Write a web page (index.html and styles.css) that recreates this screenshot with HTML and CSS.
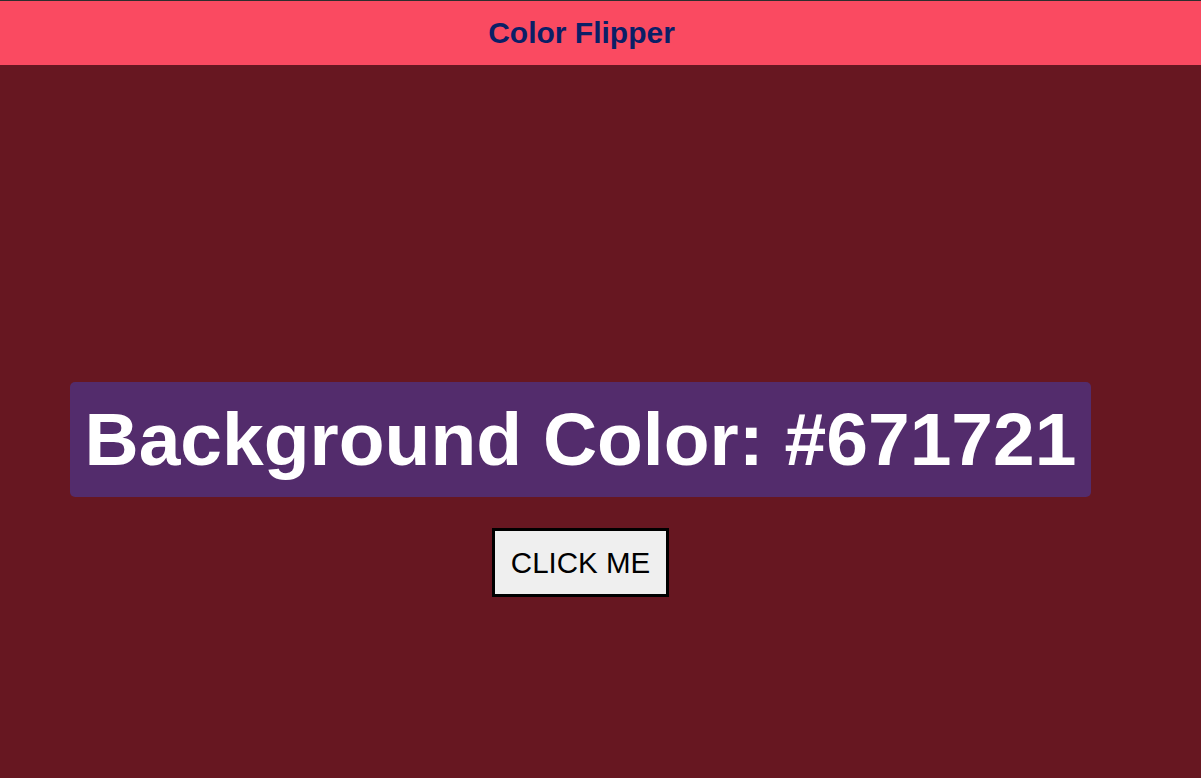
FILE: index.html
```html
<!DOCTYPE html>
<html lang="en">
<head>
<meta charset="utf-8">
<title>Color Flipper</title>
<link rel="stylesheet" href="styles.css">
</head>
<body>
<nav class="nav">
  <h2 class="nav-title">Color Flipper</h2>
</nav>
<main class="main">
  <h1 class="color-label">Background Color: <span class="color-value">#671721</span></h1>
  <button class="btn" type="button">CLICK ME</button>
</main>
</body>
</html>
```
FILE: styles.css
```css
* { box-sizing: border-box; }
html, body { margin: 0; padding: 0; }
body {
  background: #671721;
  font-family: "Liberation Sans", Arial, sans-serif;
  min-height: 100vh;
  border-top: 1px solid #2e2e2e;
}
.nav {
  background: #fa4a61;
  height: 64px;
  display: flex;
  align-items: center;
  justify-content: center;
  padding-right: 38px;
}
.nav-title {
  margin: 0;
  font-size: 30px;
  font-weight: bold;
  color: #0b1f66;
}
.main {
  width: 1161px;
  display: flex;
  flex-direction: column;
  align-items: center;
  padding-top: 317px;
}
.color-label {
  margin: 0;
  width: 1021px;
  background: #532c6c;
  color: #ffffff;
  border-radius: 5px;
  font-size: 75px;
  font-weight: bold;
  line-height: 85px;
  padding: 15px 0;
  text-align: center;
}
.btn {
  margin-top: 31px;
  font-family: "Liberation Sans", Arial, sans-serif;
  font-size: 29.5px;
  background: #efefef;
  color: #000;
  border: 3px solid #000;
  border-radius: 0;
  padding: 15px 16px;
  line-height: 33px;
}
```
